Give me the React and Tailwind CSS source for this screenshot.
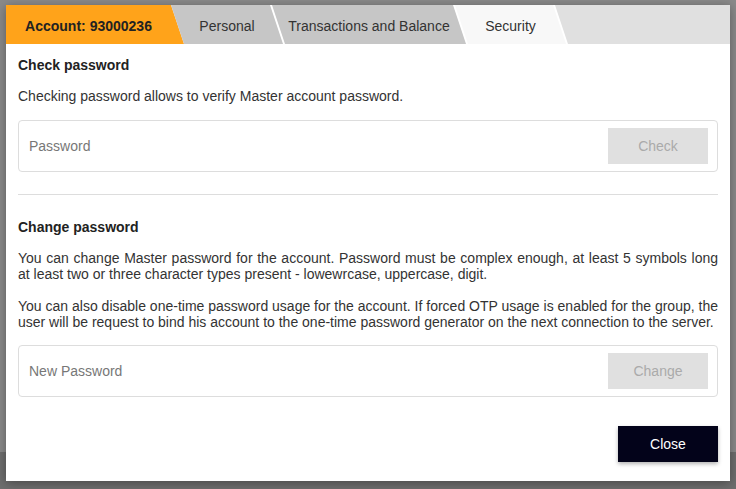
import React from 'react';

const tabBase = "h-full flex items-center justify-center pt-[3px] text-[14px] shrink-0";

const App = () => {
  return (
    <div className="w-[736px] h-[489px] overflow-hidden pt-[5px] pl-[6px] bg-[linear-gradient(to_bottom,#8a8a8a_452px,#6e6e6e_452px)] font-['Liberation_Sans',Arial,sans-serif]">
      <div className="w-[724px] h-[476px] bg-white flex flex-col shadow-[0_2px_10px_rgba(0,0,0,0.35)]">
        {/* Tabs */}
        <div className="h-[39px] flex bg-white">
          <div className={`${tabBase} w-[178px] pr-[13px] bg-[#ffa31a] font-bold text-[#222] [clip-path:polygon(0_0,calc(100%_-_13px)_0,100%_100%,0_100%)]`}>
            Account: 93000236
          </div>
          <div className={`${tabBase} w-[112px] ml-[-13px] bg-[#c6c6c6] text-[#333] [clip-path:polygon(0_0,calc(100%_-_13px)_0,100%_100%,13px_100%)]`}>
            Personal
          </div>
          <div className={`${tabBase} w-[194px] ml-[-11px] bg-[#c6c6c6] text-[#333] [clip-path:polygon(0_0,calc(100%_-_13px)_0,100%_100%,13px_100%)]`}>
            Transactions and Balance
          </div>
          <div className={`${tabBase} w-[111px] ml-[-11px] bg-[#f8f8f8] text-[#333] [clip-path:polygon(0_0,calc(100%_-_13px)_0,100%_100%,13px_100%)]`}>
            Security
          </div>
          <div className="flex-1 ml-[-11px] bg-[#e0e0e0] [clip-path:polygon(0_0,100%_0,100%_100%,13px_100%)]" />
        </div>

        {/* Body */}
        <div className="flex-1 flex flex-col px-3 pt-[13px] pb-[19px] text-[14px] leading-4 text-[#333]">
          <h3 className="font-bold text-[#222]">Check password</h3>
          <p className="mt-[15px]">Checking password allows to verify Master account password.</p>

          <div className="mt-[16px] h-[52px] border border-[#dddddd] rounded-[4px] flex items-center pl-[10px] pr-[9px]">
            <input
              type="password"
              placeholder="Password"
              className="flex-1 outline-none bg-transparent text-[14px] placeholder:text-[#777]"
            />
            <button className="w-[100px] h-[36px] bg-[#e0e0e0] text-[#aaa] text-[14px]">Check</button>
          </div>

          <div className="mt-[22px] h-px bg-[#dddddd]" />

          <h3 className="mt-[24px] font-bold text-[#222]">Change password</h3>
          <p className="mt-[15px] text-justify">
            You can change Master password for the account. Password must be complex enough, at least 5 symbols long at least two or three character types present - lowewrcase, uppercase, digit.
          </p>
          <p className="mt-[16px] text-justify">
            You can also disable one-time password usage for the account. If forced OTP usage is enabled for the group, the user will be request to bind his account to the one-time password generator on the next connection to the server.
          </p>

          <div className="mt-[15px] h-[52px] border border-[#dddddd] rounded-[4px] flex items-center pl-[10px] pr-[9px]">
            <input
              type="password"
              placeholder="New Password"
              className="flex-1 outline-none bg-transparent text-[14px] placeholder:text-[#777]"
            />
            <button className="w-[100px] h-[36px] bg-[#e0e0e0] text-[#aaa] text-[14px]">Change</button>
          </div>

          <div className="mt-auto flex justify-end">
            <button className="w-[100px] h-[36px] bg-[#03031a] text-white text-[14px] shadow-[0_2px_4px_rgba(0,0,0,0.3)]">
              Close
            </button>
          </div>
        </div>
      </div>
    </div>
  );
};

export default App;
